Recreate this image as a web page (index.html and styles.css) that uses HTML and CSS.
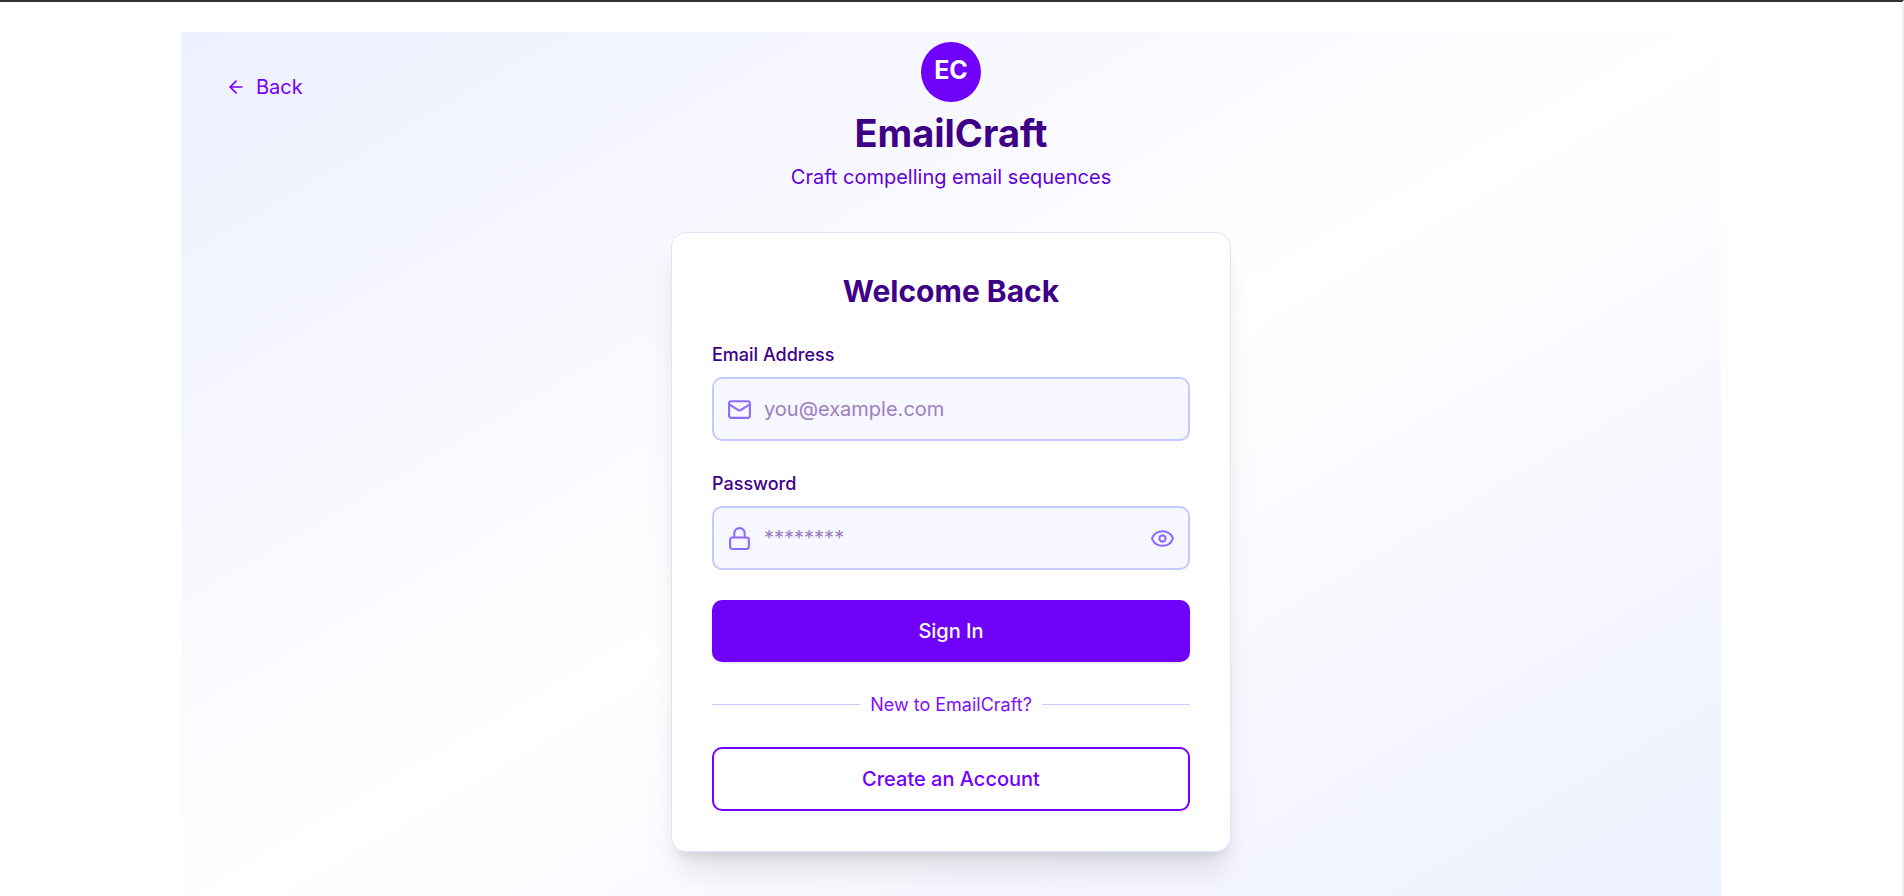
FILE: index.html
```html
<!DOCTYPE html>
<html lang="en">
<head>
<meta charset="utf-8">
<meta name="viewport" content="width=device-width, initial-scale=1">
<title>EmailCraft – Sign In</title>
<link rel="stylesheet" href="styles.css">
</head>
<body>
<div class="page">
  <main class="panel">
    <nav class="panel-nav">
      <button class="back" type="button">
        <svg class="icon-sm" viewBox="0 0 24 24" aria-hidden="true"><path d="m12 19-7-7 7-7"/><path d="M19 12H5"/></svg>
        Back
      </button>
    </nav>
    <div class="content">
      <header class="brand">
        <div class="logo">EC</div>
        <h1 class="brand-name">EmailCraft</h1>
        <p class="tagline">Craft compelling email sequences</p>
      </header>
      <section class="card">
        <h2 class="card-title">Welcome Back</h2>
        <form class="form">
          <div class="field">
            <label class="label" for="email">Email Address</label>
            <div class="control">
              <svg class="icon" viewBox="0 0 24 24" aria-hidden="true"><rect x="2" y="4" width="20" height="16" rx="2"/><path d="m22 7-8.97 5.7a1.94 1.94 0 0 1-2.06 0L2 7"/></svg>
              <input class="input" id="email" type="email" placeholder="you@example.com">
            </div>
          </div>
          <div class="field">
            <label class="label" for="password">Password</label>
            <div class="control">
              <svg class="icon" viewBox="0 0 24 24" aria-hidden="true"><rect x="3" y="11" width="18" height="11" rx="2"/><path d="M7 11V7a5 5 0 0 1 10 0v4"/></svg>
              <input class="input" id="password" type="password" placeholder="********">
              <button class="reveal" type="button" aria-label="Show password">
                <svg class="icon" viewBox="0 0 24 24" aria-hidden="true"><path d="M2.062 12.348a1 1 0 0 1 0-.696 10.75 10.75 0 0 1 19.876 0 1 1 0 0 1 0 .696 10.75 10.75 0 0 1-19.876 0"/><circle cx="12" cy="12" r="3"/></svg>
              </button>
            </div>
          </div>
          <button class="button button-primary" type="submit">Sign In</button>
          <div class="divider">New to EmailCraft?</div>
          <button class="button button-outline" type="button">Create an Account</button>
        </form>
      </section>
    </div>
  </main>
</div>
</body>
</html>
```
FILE: styles.css
```css
* {
  box-sizing: border-box;
}

html {
  overflow: hidden;
}

body {
  margin: 0;
  background: #fff;
  color: #3f0088;
  font-family: Inter, "Liberation Sans", sans-serif;
  font-size: 20px;
  line-height: 30px;
}

h1,
h2,
p {
  margin: 0;
}

button,
input {
  font: inherit;
}

button {
  cursor: pointer;
}

svg {
  display: block;
  flex: none;
  fill: none;
  stroke: currentColor;
  stroke-width: 2;
  stroke-linecap: round;
  stroke-linejoin: round;
}

.page {
  min-height: 100vh;
  padding-top: 30px;
  border-top: 2px solid #333;
  border-right: 2px solid #f0f0f0;
}

.panel {
  display: grid;
  grid-template-columns: 1fr minmax(0, 560px) 1fr;
  max-width: 1540px;
  min-height: 100vh;
  margin: 0 auto;
  padding: 10px 40px;
  background: linear-gradient(to bottom right, #edf0ff, #fff, #edf0ff);
}

.panel-nav {
  padding-top: 30px;
}

.back {
  display: flex;
  align-items: center;
  gap: 10px;
  padding: 0 5px;
  border: 0;
  background: none;
  color: #7300ff;
}

.icon-sm {
  width: 20px;
  height: 20px;
}

.icon {
  width: 25px;
  height: 25px;
  color: #8e6bff;
}

.brand {
  display: flex;
  flex-direction: column;
  align-items: center;
  margin-bottom: 40px;
  text-align: center;
}

.logo {
  display: flex;
  align-items: center;
  justify-content: center;
  width: 60px;
  height: 60px;
  margin-bottom: 10px;
  padding-bottom: 4px;
  border-radius: 50%;
  background: #6f00fa;
  color: #fff;
  font-size: 25px;
  font-weight: 700;
}

.brand-name {
  margin-bottom: 8px;
  font-size: 38px;
  font-weight: 700;
  line-height: 42px;
}

.tagline {
  color: #6100d6;
}

.card {
  padding: 40px;
  border: 1px solid #e0e3ff;
  border-radius: 15px;
  background: #fff;
  box-shadow: 0 25px 31px -6px rgb(0 0 0 / 10%), 0 10px 12px -7px rgb(0 0 0 / 10%);
}

.card-title {
  margin-bottom: 32px;
  font-size: 30px;
  font-weight: 700;
  line-height: 37px;
  text-align: center;
}

.form {
  display: flex;
  flex-direction: column;
  gap: 30px;
}

.field {
  display: flex;
  flex-direction: column;
  gap: 10px;
}

.label {
  font-size: 18px;
  font-weight: 500;
  line-height: 25px;
}

.control {
  display: flex;
  align-items: center;
  gap: 12px;
  height: 64px;
  padding: 0 13px;
  border: 2px solid #c5caff;
  border-radius: 10px;
  background: #f6f7ff;
}

.input {
  flex: 1;
  min-width: 0;
  padding: 0;
  border: 0;
  outline: 0;
  background: none;
  color: #3f0088;
}

.input::placeholder {
  color: #9d7fc1;
  opacity: 1;
}

.reveal {
  padding: 0;
  border: 0;
  background: none;
}

.button {
  border-radius: 10px;
  font-weight: 500;
}

.button-primary {
  height: 62px;
  border: 0;
  background: #6f00fa;
  color: #fff;
  box-shadow: 0 1px 3px rgb(0 0 0 / 12%);
}

.button-outline {
  height: 64px;
  border: 2px solid #7300ff;
  background: #fff;
  color: #7300ff;
}

.divider {
  display: flex;
  align-items: center;
  gap: 10px;
  color: #8010ff;
  font-size: 18px;
  line-height: 25px;
}

.divider::before,
.divider::after {
  content: "";
  flex: 1;
  border-top: 1px solid #c5caff;
}
```
